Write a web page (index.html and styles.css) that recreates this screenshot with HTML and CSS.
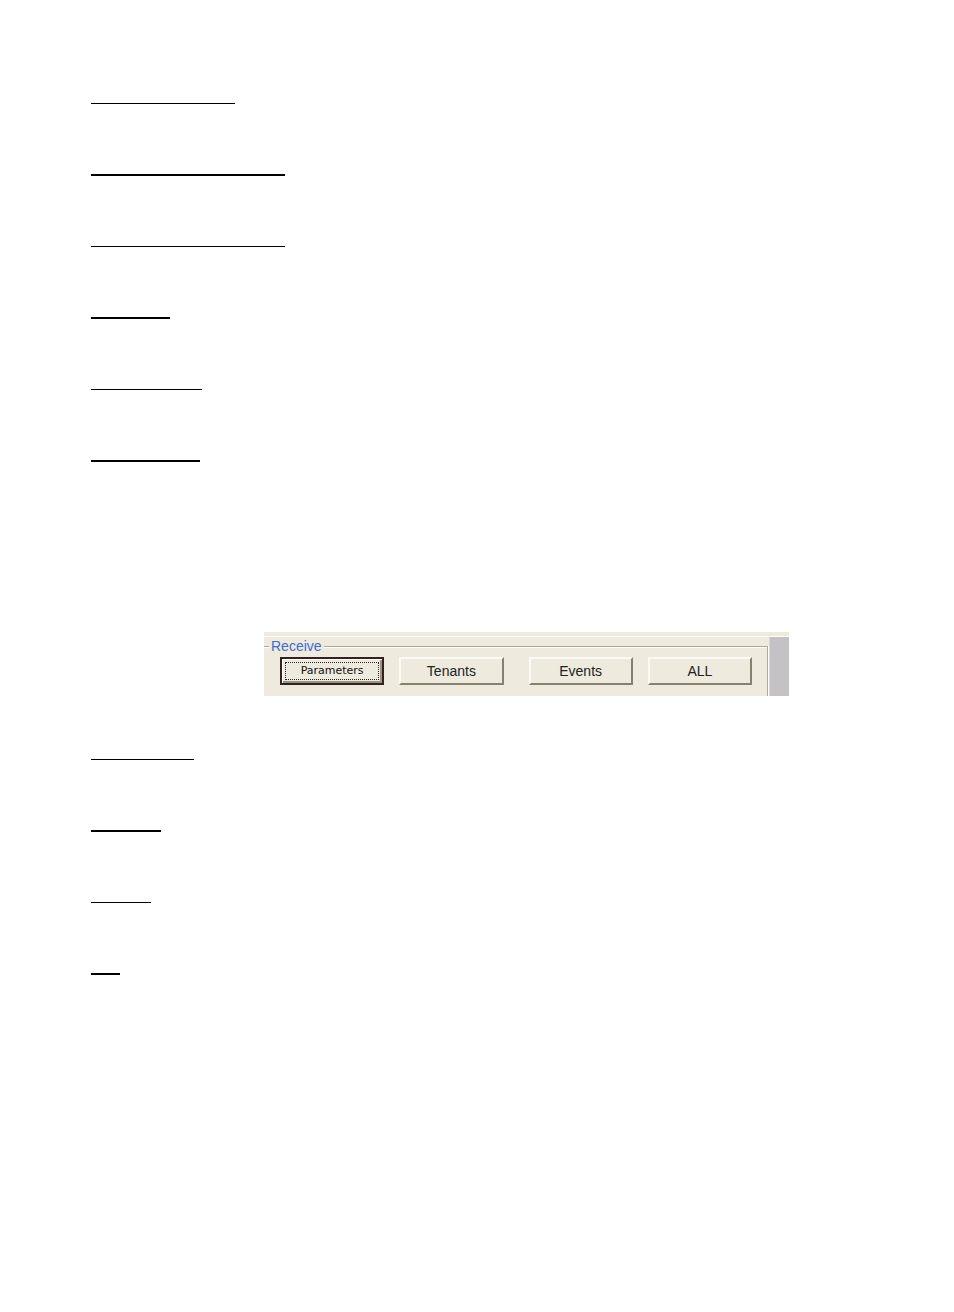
FILE: index.html
```html
<!DOCTYPE html>
<html lang="en">
<head>
<meta charset="utf-8">
<title>Receive</title>
<link rel="stylesheet" href="styles.css">
</head>
<body>
<main class="page">
  <div class="rules">
    <hr class="rule" style="width:144px">
    <hr class="rule thick" style="width:194px">
    <hr class="rule" style="width:194px">
    <hr class="rule thick" style="width:79px">
    <hr class="rule" style="width:111px">
    <hr class="rule thick" style="width:109px">
  </div>
  <section class="panel">
    <div class="panel-body">
      <fieldset class="group">
        <legend class="legend">Receive</legend>
        <div class="buttons">
          <button type="button" class="button selected"><span class="focus">Parameters</span></button>
          <button type="button" class="button">Tenants</button>
          <button type="button" class="button spaced">Events</button>
          <button type="button" class="button">ALL</button>
        </div>
      </fieldset>
      <div class="gutter"></div>
    </div>
  </section>
  <div class="rules">
    <hr class="rule" style="width:103px">
    <hr class="rule thick" style="width:70px">
    <hr class="rule" style="width:60px">
    <hr class="rule thick" style="width:29px">
  </div>
</main>
</body>
</html>
```
FILE: styles.css
```css
* { box-sizing: border-box; }
body {
  margin: 0;
  background: #fff;
  font-family: "Liberation Sans", Arial, sans-serif;
  font-size: 14px;
  line-height: 16px;
}
.page { padding: 103px 91px; }
.rules {
  display: flex;
  flex-direction: column;
  gap: 70px;
}
.rule {
  height: 1px;
  margin: 0;
  border: 0;
  background: #000;
}
.thick { height: 2px; }
.panel {
  max-width: 525px;
  margin: 170px 74px 63px 173px;
  padding-top: 4px;
  background: #eeeade;
}
.panel-body {
  display: flex;
  border-top: 1px solid #fff;
}
.group {
  flex: 1;
  min-width: 0;
  margin: 1px 1px 0 0;
  padding: 3px 15px 11px 5px;
  border: 1px solid #aca899;
  border-width: 1px 1px 0 0;
  box-shadow: inset 0 1px #fff, 1px 0 #fff;
}
.legend {
  padding: 0 2px;
  background: #eeeade;
  color: #3c6cce;
}
.buttons {
  display: flex;
  gap: 15px;
  padding-left: 11px;
}
.button {
  flex: 1;
  min-width: 0;
  height: 28px;
  padding: 0;
  border: 2px solid;
  border-color: #fbfaf5 #85816f #85816f #fbfaf5;
  background: #eeeade;
  color: #222;
  font: inherit;
}
.spaced { margin-left: 10px; }
.selected {
  border-color: #33211f;
  box-shadow: inset 1px 1px #fff, inset -2px -2px #99937f;
  color: #111;
  font: 11px/16px "DejaVu Sans", Verdana, sans-serif;
}
.focus {
  display: block;
  margin: 0 3px;
  border: 1px dotted #222;
}
.gutter {
  width: 20px;
  background: #c5c2c6;
  border-left: 1px solid #d9d6d3;
}
```
